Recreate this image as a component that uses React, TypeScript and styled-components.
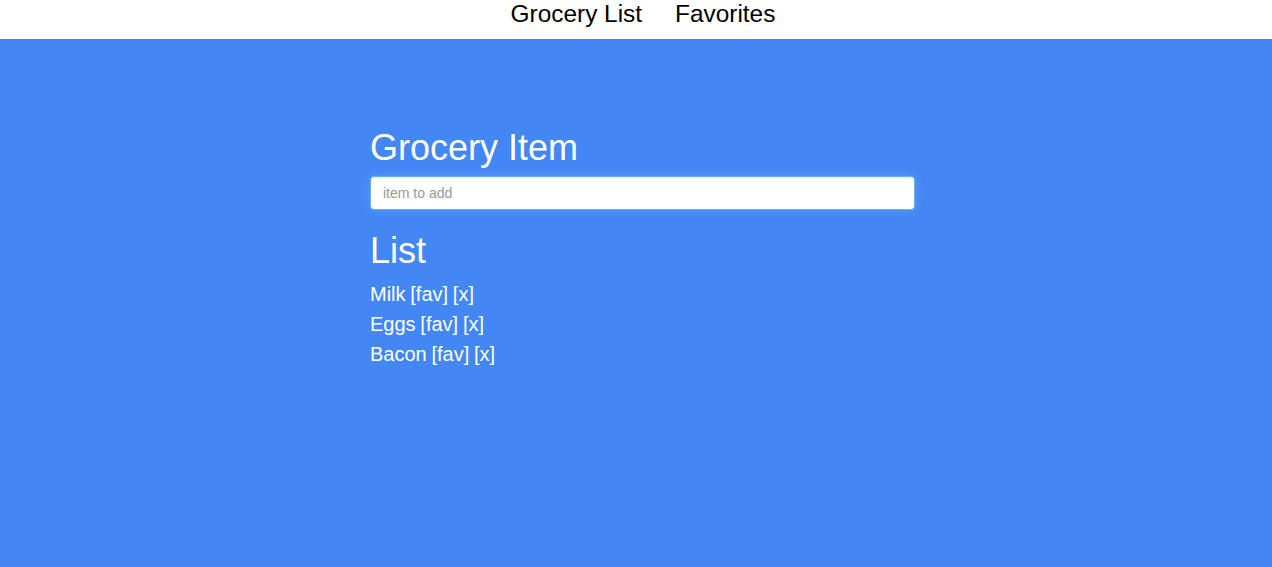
import React from "react";
import styled, { createGlobalStyle } from "styled-components";

const Global = createGlobalStyle`
  html, body { margin: 0; padding: 0; background: #4387f5; }
  body { font-family: "Liberation Sans", Arial, Helvetica, sans-serif; }
  * { box-sizing: border-box; }
`;

const Page = styled.div`
  min-height: 567px;
  display: flex;
  flex-direction: column;
  background: #4387f5;
`;

const NavBar = styled.nav`
  height: 39px;
  background: #ffffff;
  display: flex;
  justify-content: center;
  align-items: flex-start;
  gap: 33px;
  padding-left: 14px;
`;

const NavLink = styled.a`
  font-size: 24.4px;
  line-height: 28px;
  color: #000;
  text-decoration: none;
  cursor: pointer;
`;

const Main = styled.main`
  flex: 1;
  display: flex;
  flex-direction: column;
  padding: 89px 0 0 370px;
  color: #fff;
`;

const Column = styled.div`
  width: 545px;
  display: flex;
  flex-direction: column;
`;

const Heading = styled.h1<{ $gap?: number }>`
  margin: ${(p) => p.$gap ?? 0}px 0 0 0;
  font-size: 36px;
  line-height: 40px;
  font-weight: 400;
  color: #fff;
`;

const Input = styled.input`
  margin-top: 8px;
  height: 34px;
  width: 100%;
  padding: 6px 12px;
  font-family: "Liberation Sans", Arial, sans-serif;
  font-size: 14px;
  color: #555;
  background: #fff;
  border: 1px solid #66afe9;
  border-radius: 4px;
  outline: none;
  box-shadow: inset 0 1px 1px rgba(0, 0, 0, 0.075), 0 0 8px rgba(102, 175, 233, 0.6);
  &::placeholder { color: #999; }
`;

const ItemList = styled.ul`
  list-style: none;
  margin: 8px 0 0 0;
  padding: 0;
`;

const Item = styled.li`
  font-size: 20px;
  line-height: 30px;
  color: #fff;
  word-spacing: -0.8px;
`;

const items = ["Milk", "Eggs", "Bacon"];

export default function App() {
  return (
    <Page>
      <Global />
      <NavBar>
        <NavLink>Grocery List</NavLink>
        <NavLink>Favorites</NavLink>
      </NavBar>
      <Main>
        <Column>
          <Heading>Grocery Item</Heading>
          <Input placeholder="item to add" autoFocus />
          <Heading $gap={21}>List</Heading>
          <ItemList>
            {items.map((it) => (
              <Item key={it}>
                {it} [fav] [x]
              </Item>
            ))}
          </ItemList>
        </Column>
      </Main>
    </Page>
  );
}
